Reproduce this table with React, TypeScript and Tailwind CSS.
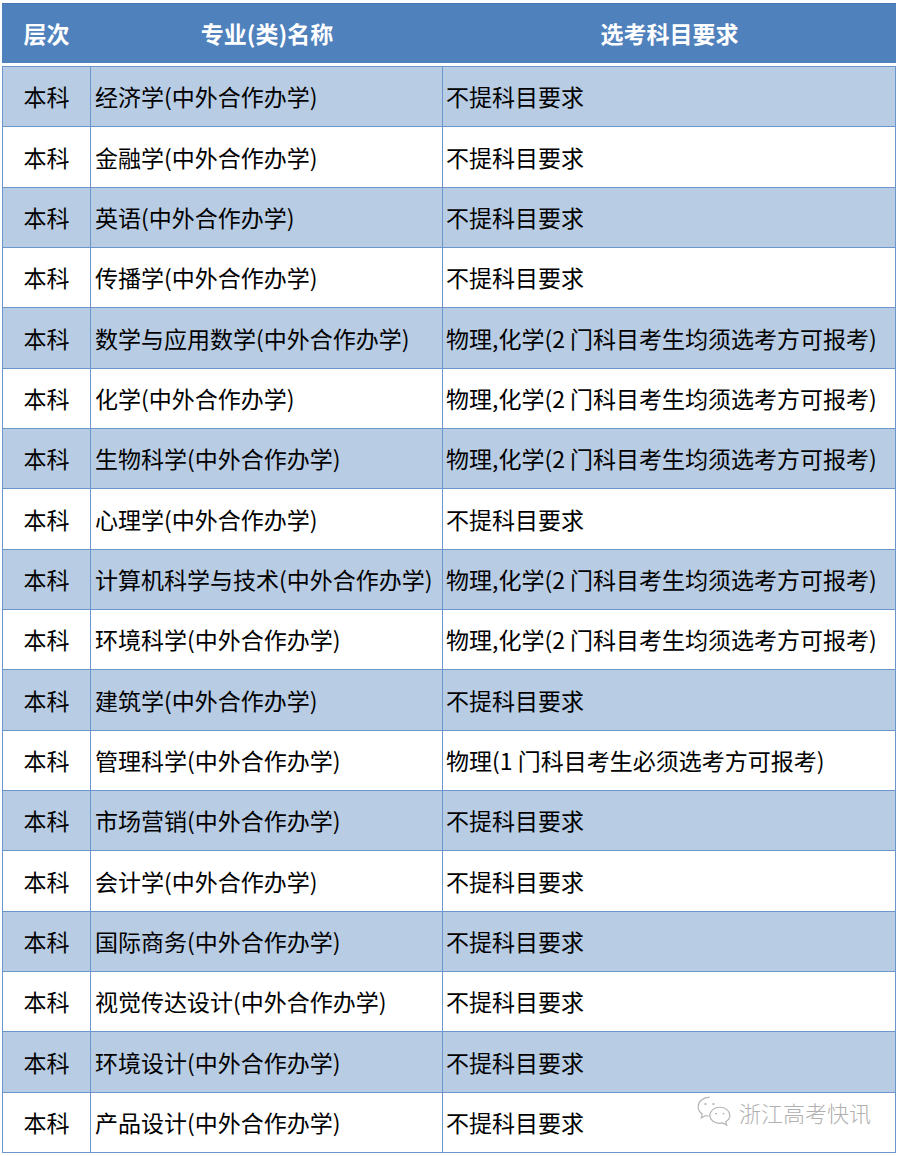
const rows: [string, string][] = [
  ['经济学(中外合作办学)', '不提科目要求'],
  ['金融学(中外合作办学)', '不提科目要求'],
  ['英语(中外合作办学)', '不提科目要求'],
  ['传播学(中外合作办学)', '不提科目要求'],
  ['数学与应用数学(中外合作办学)', '物理,化学(2 门科目考生均须选考方可报考)'],
  ['化学(中外合作办学)', '物理,化学(2 门科目考生均须选考方可报考)'],
  ['生物科学(中外合作办学)', '物理,化学(2 门科目考生均须选考方可报考)'],
  ['心理学(中外合作办学)', '不提科目要求'],
  ['计算机科学与技术(中外合作办学)', '物理,化学(2 门科目考生均须选考方可报考)'],
  ['环境科学(中外合作办学)', '物理,化学(2 门科目考生均须选考方可报考)'],
  ['建筑学(中外合作办学)', '不提科目要求'],
  ['管理科学(中外合作办学)', '物理(1 门科目考生必须选考方可报考)'],
  ['市场营销(中外合作办学)', '不提科目要求'],
  ['会计学(中外合作办学)', '不提科目要求'],
  ['国际商务(中外合作办学)', '不提科目要求'],
  ['视觉传达设计(中外合作办学)', '不提科目要求'],
  ['环境设计(中外合作办学)', '不提科目要求'],
  ['产品设计(中外合作办学)', '不提科目要求'],
]

function WeChatIcon() {
  return (
    <svg width="36" height="36" viewBox="0 0 34 34" fill="none" stroke="#b4b4b4" strokeWidth="1.1">
      <path d="M13 3C6.9 3 2 7 2 12c0 2.8 1.5 5.2 3.9 6.9L5 22.5l4.2-2.2c1.2.3 2.5.5 3.8.5" />
      <path d="M22.5 12.5c-5.2 0-9.5 3.4-9.5 7.6s4.3 7.6 9.5 7.6c1 0 2-.1 2.9-.4l3.6 2-.9-3.1c2.3-1.4 3.9-3.6 3.9-6.1 0-4.2-4.3-7.6-9.5-7.6z" />
      <circle cx="9" cy="9.5" r="1.1" fill="#b4b4b4" stroke="none" />
      <circle cx="16.5" cy="9.5" r="1.1" fill="#b4b4b4" stroke="none" />
      <circle cx="19" cy="18.5" r="0.9" fill="#b4b4b4" stroke="none" />
      <circle cx="26" cy="18.5" r="0.9" fill="#b4b4b4" stroke="none" />
    </svg>
  )
}

export default function App() {
  return (
    <div
      className="w-[900px] h-[1156px] bg-white pt-[3px] pl-[2px] relative"
      style={{ fontFamily: '"Noto Sans CJK SC", "Noto Sans", sans-serif' }}
    >
      <div className="w-[894px]">
        {/* header */}
        <div className="flex h-[60px] bg-[#4f81bd] border-t border-[#4676b2] text-white font-bold text-[23px] items-center">
          <div className="w-[89px] text-center">层次</div>
          <div className="w-[352px] text-center">专业(类)名称</div>
          <div className="flex-1 text-center">选考科目要求</div>
        </div>
        <div className="h-[3px] bg-white" />

        <div className="border-l border-r border-t border-[#6a96cc]">
          {rows.map(([name, req], i) => (
            <div
              key={i}
              className={`flex h-[60.33px] border-b border-[#6a96cc] text-[23px] text-black ${
                i % 2 === 0 ? 'bg-[#b8cce4]' : 'bg-white'
              }`}
            >
              <div className="w-[88px] flex items-center justify-center border-r border-[#6a96cc]">本科</div>
              <div className="w-[352px] flex items-center pl-[4px] border-r border-[#6a96cc] whitespace-nowrap">{name}</div>
              <div className="flex-1 flex items-center pl-[3px] whitespace-nowrap">{req}</div>
            </div>
          ))}
        </div>
      </div>

      {/* watermark */}
      <div className="absolute left-[696px] top-[1094px] flex items-center gap-[7px]">
        <WeChatIcon />
        <span className="text-[22px] text-[#b0b0b0] font-light">浙江高考快讯</span>
      </div>
    </div>
  )
}
